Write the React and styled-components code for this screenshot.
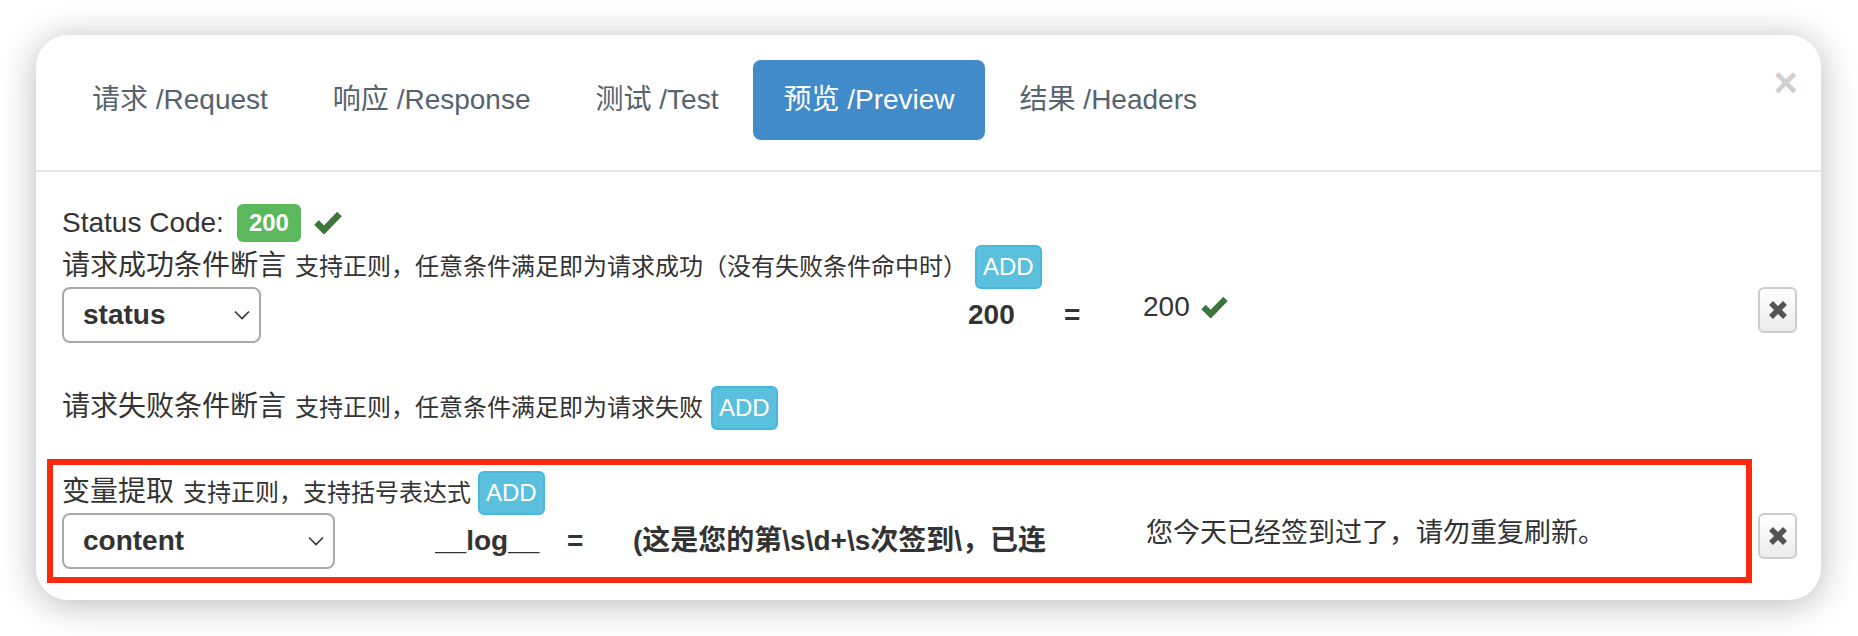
import React from 'react'
import styled, { createGlobalStyle } from 'styled-components'

const FONT = `"Liberation Sans", "Noto Sans CJK SC", sans-serif`

const GlobalStyle = createGlobalStyle`
    html, body {
        margin: 0;
        background: #fff;
        font-family: ${FONT};
        color: #333;
    }
    * { box-sizing: border-box; }
`

const Page = styled.div`
    padding: 35px 37px 36px 36px;
`
const Modal = styled.div`
    background: #fff;
    border-radius: 32px;
    box-shadow: 0 4px 36px rgba(0, 0, 0, 0.28);
`
const Header = styled.div`
    display: flex;
    align-items: flex-start;
    padding: 25px 23px 30px 26px;
    border-bottom: 2px solid #e5e5e5;
`
const Tabs = styled.div`
    display: flex;
    gap: 5px;
`
const Tab = styled.div`
    padding: 20px 30px;
    font-size: 28px;
    line-height: 40px;
    border-radius: 8px;
    white-space: nowrap;
    color: ${(p) => (p.$active ? '#fff' : '#55636f')};
    background: ${(p) => (p.$active ? '#428bca' : 'transparent')};
`
const CloseButton = styled.div`
    margin-left: auto;
    margin-top: 2px;
    font-size: 42px;
    line-height: 42px;
    font-weight: bold;
    color: rgba(0, 0, 0, 0.2);
`
const Body = styled.div`
    padding: 30px 24px 31px 26px;
`
const StatusLine = styled.div`
    display: flex;
    align-items: center;
    height: 41px;
    font-size: 28px;
    line-height: 40px;
`
const Badge = styled.span`
    margin-left: 13px;
    height: 38px;
    padding: 0 12px;
    display: inline-flex;
    align-items: center;
    background: #5cb85c;
    border-radius: 6px;
    color: #fff;
    font-weight: bold;
    font-size: 24px;
`
const Section = styled.div`
    position: relative;
    margin-bottom: ${(p) => p.$after || 0}px;
`
const SectionHead = styled.div`
    display: flex;
    align-items: baseline;
    height: 44px;
    white-space: nowrap;
`
const Title = styled.span`
    font-size: 28px;
`
const Hint = styled.span`
    margin-left: 9px;
    font-size: 24px;
`
const AddButton = styled.button`
    margin-left: ${(p) => p.$gap || 8}px;
    height: 44px;
    padding: 0 6px;
    font-family: ${FONT};
    font-size: 24px;
    line-height: 40px;
    color: #fff;
    background: #5bc0de;
    border: 2px solid #46b8da;
    border-radius: 6px;
`
const Row = styled.div`
    display: grid;
    grid-template-columns: ${(p) => p.$cols};
    align-items: start;
    font-size: 28px;
    line-height: 40px;
`
const SelectBox = styled.div`
    height: 56px;
    display: flex;
    align-items: center;
    justify-content: space-between;
    padding: 0 9px 0 19px;
    border: 2px solid #a9a9a9;
    border-radius: 8px;
    font-weight: bold;
    font-size: 28px;
    color: #333;
`
const Cell = styled.div`
    align-self: center;
    font-weight: bold;
    white-space: nowrap;
    overflow: hidden;
`
const Result = styled.div`
    display: flex;
    align-items: center;
    white-space: nowrap;
    font-size: ${(p) => p.$size || 28}px;
`
const DeleteButton = styled.div`
    width: 39px;
    height: 46px;
    display: flex;
    align-items: center;
    justify-content: center;
    border: 2px solid #ccc;
    border-radius: 6px;
    background: linear-gradient(#fff, #ececec);
`
const Highlight = styled.div`
    position: absolute;
    top: -10px;
    bottom: -14px;
    left: -15px;
    right: 45px;
    border: 6px solid #fb2a0d;
    pointer-events: none;
`

const Check = ({ w = 28, h = 23, ml = 0 }) => (
    <svg width={w} height={h} viewBox="0 0 28 23" style={{ marginLeft: ml }}>
        <path d="M2.5 11.5 L10 19 L25.5 3" fill="none" stroke="#3c763d" strokeWidth="6.5" />
    </svg>
)

const Remove = () => (
    <svg width="20" height="20" viewBox="0 0 20 20">
        <path d="M3 3 L17 17 M17 3 L3 17" stroke="#555" strokeWidth="5.5" />
    </svg>
)

const Chevron = () => (
    <svg width="16" height="10" viewBox="0 0 16 10">
        <path d="M1 1.5 L8 8.5 L15 1.5" fill="none" stroke="#333" strokeWidth="1.6" />
    </svg>
)

const tabs = ['请求 /Request', '响应 /Response', '测试 /Test', '预览 /Preview', '结果 /Headers']

export default function App() {
    return (
        <Page>
            <GlobalStyle />
            <Modal>
                <Header>
                    <Tabs>
                        {tabs.map((t, i) => <Tab key={t} $active={i === 3}>{t}</Tab>)}
                    </Tabs>
                    <CloseButton>×</CloseButton>
                </Header>
                <Body>
                    <StatusLine>
                        Status Code:
                        <Badge>200</Badge>
                        <Check ml={13} />
                    </StatusLine>

                    <Section $after={41}>
                        <SectionHead>
                            <Title>请求成功条件断言</Title>
                            <Hint>支持正则，任意条件满足即为请求成功（没有失败条件命中时）</Hint>
                            <AddButton>ADD</AddButton>
                        </SectionHead>
                        <Row $cols="199px 707px 96px 79px 1fr 39px">
                            <SelectBox>status<Chevron /></SelectBox>
                            <div />
                            <Cell>200</Cell>
                            <Cell>=</Cell>
                            <Result>200<Check w={29} h={22} ml={10} /></Result>
                            <DeleteButton><Remove /></DeleteButton>
                        </Row>
                    </Section>

                    <Section $after={41}>
                        <SectionHead>
                            <Title>请求失败条件断言</Title>
                            <Hint>支持正则，任意条件满足即为请求失败</Hint>
                            <AddButton>ADD</AddButton>
                        </SectionHead>
                    </Section>

                    <Section>
                        <SectionHead>
                            <Title>变量提取</Title>
                            <Hint>支持正则，支持括号表达式</Hint>
                            <AddButton $gap={7}>ADD</AddButton>
                        </SectionHead>
                        <Row $cols="273px 100px 132px 66px 513px 1fr 39px">
                            <SelectBox>content<Chevron /></SelectBox>
                            <div />
                            <Cell>__log__</Cell>
                            <Cell>=</Cell>
                            <Cell>(这是您的第\s\d+\s次签到\，已连</Cell>
                            <Result $size={27}>您今天已经签到过了，请勿重复刷新。</Result>
                            <DeleteButton><Remove /></DeleteButton>
                        </Row>
                        <Highlight />
                    </Section>
                </Body>
            </Modal>
        </Page>
    )
}
